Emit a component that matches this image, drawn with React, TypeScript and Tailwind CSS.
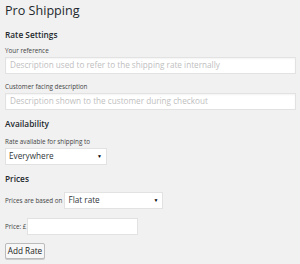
import React from "react";

const font = { fontFamily: '"Open Sans", "Noto Sans", sans-serif' };

export default function App() {
  return (
    <div className="w-[300px] h-[264px] bg-[#f1f1f1] overflow-hidden pl-[5px] pr-[4px]" style={font}>
      <div className="pt-[2px] text-[12.6px] leading-[18px] text-[#23282d]">Pro Shipping</div>
      <div className="mt-[9px] text-[8.3px] leading-[12px] font-semibold text-[#23282d]">Rate Settings</div>
      <div className="mt-[5px] text-[6.3px] leading-[9px] text-[#444]">Your reference</div>
      <div className="mt-[2px] h-[17px] bg-white border border-[#e2e2e2] shadow-[inset_0_1px_2px_rgba(0,0,0,0.05)] flex items-center pl-[4px] text-[8.2px] text-[#c0c0c0] whitespace-nowrap">
        Description used to refer to the shipping rate internally
      </div>
      <div className="mt-[8px] text-[6.3px] leading-[9px] text-[#444]">Customer facing description</div>
      <div className="mt-[2px] h-[17px] bg-white border border-[#e2e2e2] shadow-[inset_0_1px_2px_rgba(0,0,0,0.05)] flex items-center pl-[4px] text-[8.2px] text-[#c0c0c0] whitespace-nowrap">
        Description shown to the customer during checkout
      </div>
      <div className="mt-[8px] text-[8.3px] leading-[12px] font-semibold text-[#23282d]">Availability</div>
      <div className="mt-[7px] text-[6.3px] leading-[9px] text-[#444]">Rate available for shipping to</div>
      <div className="mt-[2px] w-[102px] h-[17px] bg-white border border-[#e2e2e2] flex items-center justify-between pl-[3px] pr-[4px] text-[8.2px] text-[#32373c]">
        <span>Everywhere</span>
        <span className="text-[5px] text-black">▼</span>
      </div>
      <div className="mt-[8px] text-[8.3px] leading-[12px] font-semibold text-[#23282d]">Prices</div>
      <div className="mt-[7px] flex items-center gap-[2px]">
        <span className="text-[6.3px] text-[#444]">Prices are based on</span>
        <div className="w-[99px] h-[17px] bg-white border border-[#e2e2e2] flex items-center justify-between pl-[3px] pr-[4px] text-[8.2px] text-[#32373c]">
          <span>Flat rate</span>
          <span className="text-[5px] text-black">▼</span>
        </div>
      </div>
      <div className="mt-[9px] flex items-center gap-[1px]">
        <span className="text-[6.3px] text-[#444]">Price: £</span>
        <div className="w-[111px] h-[17px] bg-white border border-[#e2e2e2]" />
      </div>
      <div className="mt-[8px] flex">
        <button className="h-[16px] w-[40px] border border-[#bbb] bg-[#f7f7f7] rounded-[2px] text-[8.2px] leading-none text-[#222] shadow-[0_1px_0_#ccc]">
          Add Rate
        </button>
      </div>
    </div>
  );
}
